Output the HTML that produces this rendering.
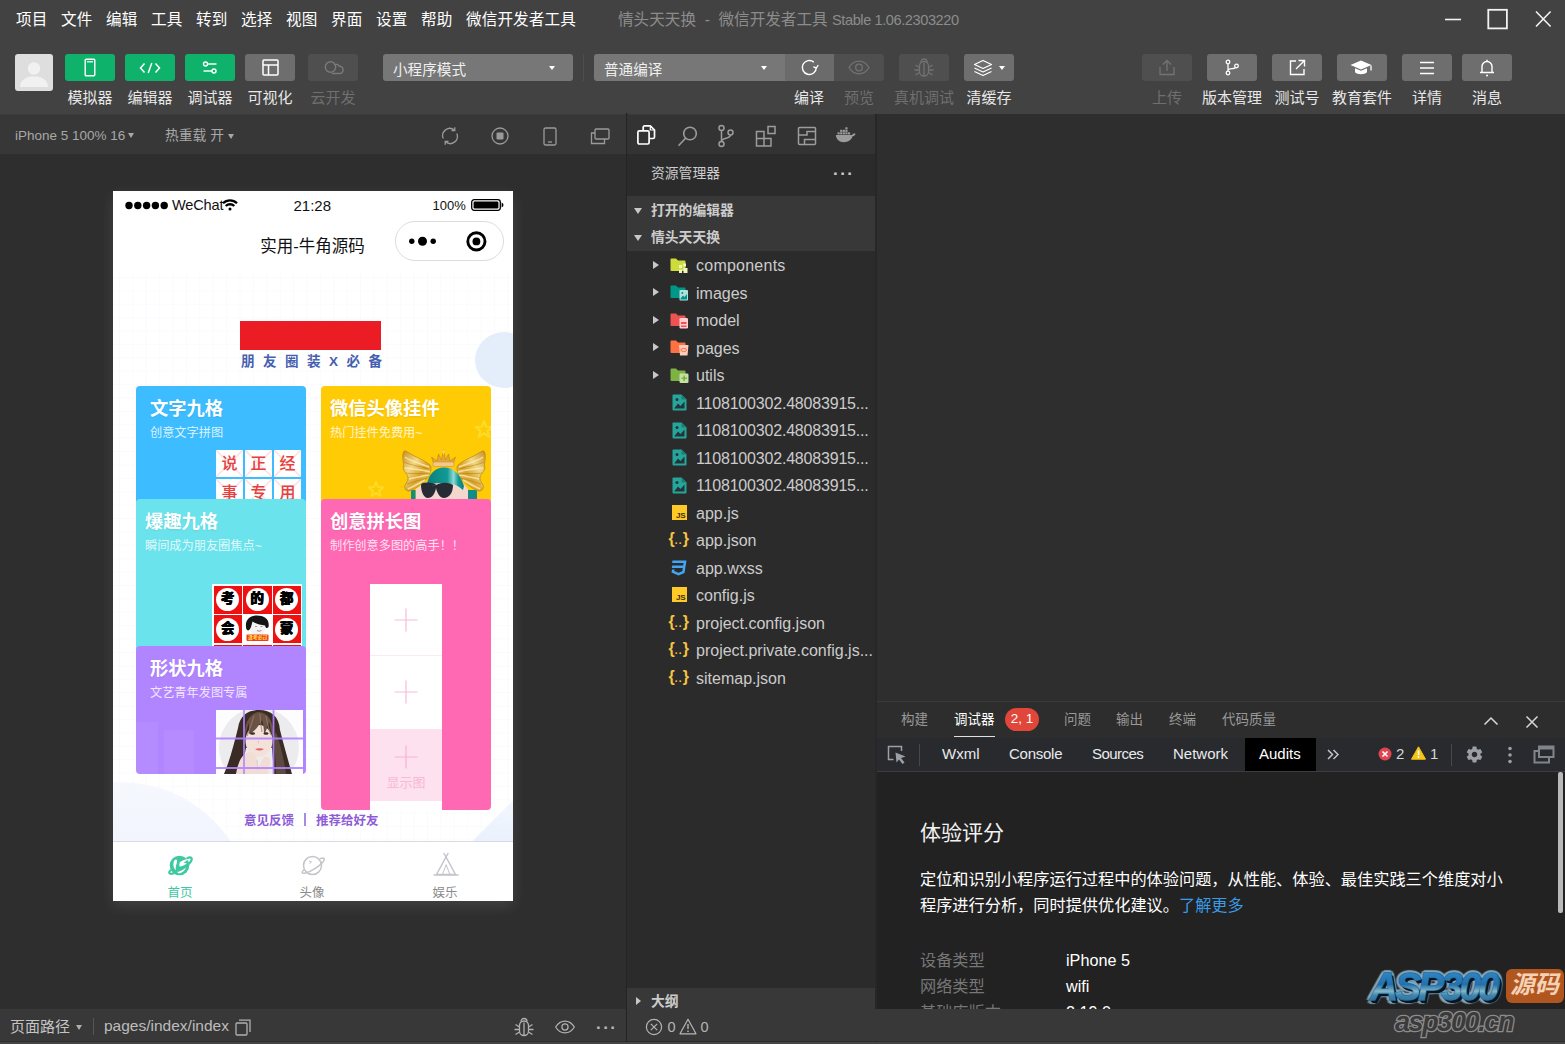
<!DOCTYPE html>
<html lang="zh-CN">
<head>
<meta charset="utf-8">
<title>微信开发者工具</title>
<style>
*{box-sizing:border-box;margin:0;padding:0}
html,body{width:1565px;height:1044px;overflow:hidden;background:#2e2e2e}
body{position:relative;font-family:"Liberation Sans","Noto Sans CJK SC",sans-serif;color:#ccc;font-size:15px}
.abs{position:absolute}
.t{position:absolute;white-space:nowrap;line-height:1}
svg{position:absolute;overflow:visible}
/* top */
#top{left:0;top:0;width:1565px;height:114px;background:#424242}
.menu{top:12px;font-size:15.6px;color:#fff;letter-spacing:0.1px}
.tb{position:absolute;top:54px;height:27px;width:50px;border-radius:3px}
.g{background:#0fb26b}
.gr{background:#6e6e6e}
.dk{background:#4f4f4f}
.lbl{top:90px;font-size:15px;color:#e8e8e8;text-align:center}
.lbl.dim{color:#6f6f6f}
.sel{position:absolute;top:54px;height:27px;background:#777;border-radius:3px}
/* sim */
#simbar{left:0;top:114px;width:626px;height:40px;background:#373737;border-top:1px solid #3b3b3b}
#simbg{left:0;top:154px;width:626px;height:855px;background:#2e2e2e}
#simstat{left:0;top:1009px;width:626px;height:32px;background:#383838}
#vdiv{left:625.500px;top:113px;width:2px;height:929px;background:#242424;border-right:.6px solid #333}
/* explorer */
#act{left:628px;top:114px;width:247px;height:40px;background:#333;border-top:1px solid #393939}
#exp{left:627px;top:154px;width:248px;height:890px;background:#2b2b2b}
.hdr{position:absolute;left:627px;width:248px;height:27px;background:#383838}
.hd{font-size:13.8px;font-weight:bold;color:#ccc}
.fn{left:696px;font-size:16px;color:#ccc}
.arr{position:absolute;width:0;height:0;border-left:6px solid #c8c8c8;border-top:4.5px solid transparent;border-bottom:4.5px solid transparent}
.arrd{position:absolute;width:0;height:0;border-top:6px solid #c8c8c8;border-left:4.5px solid transparent;border-right:4.5px solid transparent}
/* editor + panel */
#ediv{left:875px;top:114px;width:2px;height:929px;background:#272727}
#editor{left:877px;top:114px;width:688px;height:587px;background:#2e2e2e}
#ptabs{left:877px;top:701px;width:688px;height:37px;background:#2d2d2d;border-top:1px solid #3a3a3a}
#dtabs{left:877px;top:738px;width:688px;height:34px;background:#292a2d;border-bottom:1px solid #3d3d3d}
#dcont{left:877px;top:772px;width:688px;height:237px;background:#222}
#stat{left:627px;top:1009px;width:938px;height:32px;background:#383838}
#botedge{left:0;top:1041.500px;width:1565px;height:3px;background:#454545}
.pt{top:713px;font-size:13.5px;color:#999}
.dt{top:746px;font-size:15px;color:#e8eaed}
.ct{font-size:18.3px;font-weight:bold;color:#fff;text-shadow:0 1px 2px rgba(0,0,0,.08)}
.cs{font-size:12.2px;color:rgba(255,255,255,.82)}
.cell{width:27px;height:27px;background:linear-gradient(45deg,transparent 47%,rgba(240,110,110,.22) 49%,rgba(240,110,110,.22) 51%,transparent 53%),linear-gradient(-45deg,transparent 47%,rgba(240,110,110,.22) 49%,rgba(240,110,110,.22) 51%,transparent 53%),#fff;color:#e5403d;font-size:16px;font-weight:500;line-height:27px;text-align:center}
.rch{width:23px;height:23px;border-radius:50%;background:#fff;color:#000;font-size:13.5px;font-weight:900;line-height:22px;text-align:center;text-shadow:.4px 0 0 #000,-.4px 0 0 #000}
.wm::after{content:"ASP300";position:absolute;left:0;top:0;color:transparent;background:linear-gradient(180deg,#2f86c4 12%,#2371ae 45%,#5f9cb8 56%,#86b7c6 62%,#3f87ae 72%,#2a6f9c 90%);-webkit-background-clip:text;background-clip:text;text-shadow:none;-webkit-text-stroke:0}
</style>
</head>
<body>
<div id="top" class="abs"></div>
<!-- menu -->
<div class="t menu" style="left:16px">项目</div>
<div class="t menu" style="left:61px">文件</div>
<div class="t menu" style="left:106px">编辑</div>
<div class="t menu" style="left:151px">工具</div>
<div class="t menu" style="left:196px">转到</div>
<div class="t menu" style="left:241px">选择</div>
<div class="t menu" style="left:286px">视图</div>
<div class="t menu" style="left:331px">界面</div>
<div class="t menu" style="left:376px">设置</div>
<div class="t menu" style="left:421px">帮助</div>
<div class="t menu" style="left:466px">微信开发者工具</div>
<div class="t" style="left:618px;top:12px;font-size:15.6px;color:#8c8c8c">情头天天换&nbsp; -&nbsp; 微信开发者工具 <span style="font-size:14.600px;letter-spacing:-.42px">Stable 1.06.2303220</span></div>
<!-- window controls -->
<svg style="left:1440px;top:4px" width="120" height="30" viewBox="0 0 120 30" fill="none" stroke="#f2f2f2" stroke-width="1.6"><path d="M5 15.5H21"/><rect x="48.300000000000004" y="5.8" width="18.6" height="18.6" stroke-width="1.8"/><path d="M96 7.5L110.600 22.500M110.600 7.500L96 22.500"/></svg>
<!-- avatar -->
<div class="abs" style="left:15px;top:54px;width:38px;height:37px;background:#dedede;border-radius:3px;overflow:hidden">
<svg style="left:0;top:0" width="38" height="37" viewBox="0 0 38 37"><circle cx="19" cy="14.500" r="6.200" fill="#f1f1f1"/><path d="M5 33C5 25 12 23.500 15 22.500H23C26 23.500 33 25 33 33Z" fill="#f1f1f1"/></svg>
</div>
<!-- left buttons -->
<div class="tb g" style="left:65px"><svg style="left:19px;top:4px" width="12" height="19" viewBox="0 0 12 19" fill="none" stroke="#fff" stroke-width="1.4"><rect x="1.200" y="1.200" width="9.600" height="16.600" rx="1"/><path d="M3 3.800H9" stroke-width="1.200"/></svg></div>
<div class="tb g" style="left:125px"><svg style="left:14px;top:8px" width="22" height="12" viewBox="0 0 22 12" fill="none" stroke="#fff" stroke-width="1.5"><path d="M5.500 1.500L1.500 6L5.500 10.500M16.500 1.500L20.500 6L16.500 10.500M12.800 1L9.200 11"/></svg></div>
<div class="tb g" style="left:185px"><svg style="left:17px;top:6px" width="16" height="15" viewBox="0 0 16 15" fill="none" stroke="#fff" stroke-width="1.4"><circle cx="3.500" cy="4" r="2"/><path d="M5.500 4H14.500"/><circle cx="12" cy="11" r="2"/><path d="M1.500 11H10"/></svg></div>
<div class="tb gr" style="left:245px"><svg style="left:17px;top:5px" width="17" height="17" viewBox="0 0 17 17" fill="none" stroke="#fff" stroke-width="1.5"><rect x="1" y="1" width="15" height="15" rx="1"/><path d="M1 6H16M6.500 6V16"/></svg></div>
<div class="tb dk" style="left:308px"><svg style="left:15px;top:6px" width="22" height="16" viewBox="0 0 22 16" fill="none" stroke="#7a7a7a" stroke-width="1.4"><circle cx="7.500" cy="7" r="5.200"/><path d="M9 13.500H16.500A3.600 3.600 0 0 0 16.500 6.300A4 4 0 0 0 11 5"/></svg></div>
<div class="t lbl" style="left:40px;width:100px">模拟器</div>
<div class="t lbl" style="left:100px;width:100px">编辑器</div>
<div class="t lbl" style="left:160px;width:100px">调试器</div>
<div class="t lbl" style="left:220px;width:100px">可视化</div>
<div class="t lbl dim" style="left:283px;width:100px">云开发</div>
<!-- selects -->
<div class="sel" style="left:383px;width:190px"><div class="t" style="left:10px;top:8.500px;font-size:14.600px;color:#f0f0f0">小程序模式</div><div class="abs" style="left:166px;top:12px;border-top:4.500px solid #fff;border-left:3.500px solid transparent;border-right:3.500px solid transparent"></div></div>
<div class="abs" style="left:583px;top:54px;width:1px;height:27px;background:#4e4e4e"></div>
<div class="sel" style="left:594px;width:191px;border-radius:3px 0 0 3px"><div class="t" style="left:10px;top:8.500px;font-size:14.600px;color:#f0f0f0">普通编译</div><div class="abs" style="left:167px;top:12px;border-top:4.500px solid #fff;border-left:3.500px solid transparent;border-right:3.500px solid transparent"></div></div>
<div class="tb" style="left:785px;width:49px;background:#6b6b6b;border-radius:0"><svg style="left:14px;top:3px" width="21" height="21" viewBox="0 0 21 21" fill="none" stroke="#fff" stroke-width="1.4"><path d="M17.300 10.500A7 7 0 1 1 14.800 5.100"/><path d="M14.300 9.800L17.400 10.900L19.300 8" stroke-width="1.300"/></svg></div>
<div class="tb dk" style="left:834px;border-radius:0 3px 3px 0"><svg style="left:14px;top:6px" width="22" height="15" viewBox="0 0 22 15" fill="none" stroke="#737373" stroke-width="1.3"><path d="M1 7.500C4 2.500 8 1.200 11 1.200S18 2.500 21 7.500C18 12.500 14 13.800 11 13.800S4 12.500 1 7.500Z"/><circle cx="11" cy="7.500" r="3.300"/></svg></div>
<div class="tb dk" style="left:899px"><svg style="left:14px;top:4px" width="22" height="19" viewBox="0 0 22 19" fill="none" stroke="#737373" stroke-width="1.3"><path d="M6.500 8A4.500 4.500 0 0 1 15.500 8V13.500A4.500 4.500 0 0 1 6.500 13.500Z"/><path d="M11 5V17.500M8 4A3 3 0 0 1 14 4M6.500 9.500L2.500 7M6.500 12H1.500M6.500 14.500L2.500 17M15.500 9.500L19.500 7M15.500 12H20.500M15.500 14.500L19.500 17"/></svg></div>
<div class="tb gr" style="left:964px"><svg style="left:9px;top:5px" width="20" height="18" viewBox="0 0 20 18" fill="none" stroke="#fff" stroke-width="1.3" stroke-linejoin="round"><path d="M10 1.500L18.500 5.500L10 9.500L1.500 5.500Z"/><path d="M1.500 9L10 13L18.500 9M1.500 12.500L10 16.500L18.500 12.500"/></svg><div class="abs" style="left:35px;top:12px;border-top:4px solid #fff;border-left:3.500px solid transparent;border-right:3.500px solid transparent"></div></div>
<div class="t lbl" style="left:759px;width:100px">编译</div>
<div class="t lbl dim" style="left:809px;width:100px">预览</div>
<div class="t lbl dim" style="left:874px;width:100px">真机调试</div>
<div class="t lbl" style="left:939px;width:100px">清缓存</div>
<!-- right buttons -->
<div class="tb dk" style="left:1142px"><svg style="left:16px;top:5px" width="18" height="17" viewBox="0 0 18 17" fill="none" stroke="#737373" stroke-width="1.3"><path d="M2 8V15.500H16V8M9 12V1.500M5 5.500L9 1.500L13 5.500"/></svg></div>
<div class="tb gr" style="left:1207px"><svg style="left:17px;top:5px" width="16" height="17" viewBox="0 0 16 17" fill="none" stroke="#fff" stroke-width="1.3"><circle cx="4" cy="3" r="1.800"/><circle cx="4" cy="14" r="1.800"/><circle cx="12.500" cy="7" r="1.800"/><path d="M4 4.800V12.200M4 11.500C4 8.500 11 10.500 11.500 8.500"/></svg></div>
<div class="tb gr" style="left:1272px"><svg style="left:17px;top:5px" width="17" height="17" viewBox="0 0 17 17" fill="none" stroke="#fff" stroke-width="1.4"><path d="M7 2H1.500V15.500H15V10M9.500 1.500H15.500V7.500M15.500 1.500L7 10"/></svg></div>
<div class="tb gr" style="left:1337px"><svg style="left:13px;top:6px" width="24" height="16" viewBox="0 0 24 16"><path d="M11 0.500L21.500 5L11 9.500L0.500 5Z" fill="#fff"/><path d="M5 8.200V12.200C7 14.800 15 14.800 17 12.200V8.200L11 10.800Z" fill="#fff"/><path d="M21 5.500V10.500" stroke="#fff" stroke-width="1.300" fill="none"/></svg></div>
<div class="tb gr" style="left:1402px"><svg style="left:17px;top:7px" width="16" height="14" viewBox="0 0 16 14" fill="none" stroke="#fff" stroke-width="1.4"><path d="M1 1.500H15M1 7H15M1 12.500H15"/></svg></div>
<div class="tb gr" style="left:1462px"><svg style="left:17px;top:4px" width="16" height="20" viewBox="0 0 16 20" fill="none" stroke="#fff" stroke-width="1.4"><path d="M3 14V8.500A5 5 0 0 1 13 8.500V14M1 14.500H15"/><circle cx="8" cy="17.500" r="1" fill="#fff" stroke="none"/><path d="M8 3.500V1.800"/></svg></div>
<div class="t lbl dim" style="left:1117px;width:100px">上传</div>
<div class="t lbl" style="left:1182px;width:100px">版本管理</div>
<div class="t lbl" style="left:1247px;width:100px">测试号</div>
<div class="t lbl" style="left:1312px;width:100px">教育套件</div>
<div class="t lbl" style="left:1377px;width:100px">详情</div>
<div class="t lbl" style="left:1437px;width:100px">消息</div>
<!--TOOLBAR_END-->
<div id="simbar" class="abs"></div>
<div id="simbg" class="abs"></div>
<div class="t" style="left:15px;top:129px;font-size:13.500px;color:#a8a8a8">iPhone 5 100% 16</div>
<div class="abs" style="left:128px;top:133px;border-top:5px solid #a8a8a8;border-left:3.500px solid transparent;border-right:3.500px solid transparent"></div>
<div class="t" style="left:165px;top:129px;font-size:13.800px;color:#a8a8a8">热重载 开</div>
<div class="abs" style="left:227.500px;top:133.500px;border-top:5px solid #a8a8a8;border-left:3.500px solid transparent;border-right:3.500px solid transparent"></div>
<!-- sim toolbar icons -->
<svg style="left:440px;top:126px" width="20" height="20" viewBox="0 0 20 20" fill="none" stroke="#9a9a9a" stroke-width="1.3"><path d="M3.200 12.500A7.200 7.200 0 0 1 14.500 4.200M16.800 7.500A7.200 7.200 0 0 1 5.500 15.800"/><path d="M14.800 1.200L14.800 4.500L11.500 4.500M5.200 18.800L5.200 15.500L8.500 15.500"/></svg>
<svg style="left:490px;top:126px" width="20" height="20" viewBox="0 0 20 20" fill="none" stroke="#9a9a9a" stroke-width="1.3"><circle cx="10" cy="10" r="8"/><rect x="6.500" y="6.500" width="7" height="7" rx="1" fill="#9a9a9a" stroke="none"/></svg>
<svg style="left:543px;top:127px" width="14" height="19" viewBox="0 0 14 19" fill="none" stroke="#9a9a9a" stroke-width="1.3"><rect x="1" y="1" width="12" height="17" rx="1.500"/><path d="M5 15H9"/></svg>
<svg style="left:590px;top:128px" width="20" height="17" viewBox="0 0 20 17" fill="none" stroke="#9a9a9a" stroke-width="1.3"><rect x="5" y="1" width="14" height="10" rx="1"/><path d="M5 5H1.500V15.500H14.500V11"/></svg>
<!-- phone -->
<div id="phone" class="abs" style="left:113px;top:191px;width:400px;height:710px;background:#fff;overflow:hidden;box-shadow:0 5px 14px rgba(255,255,255,.1)">
<!-- status bar -->
<svg style="left:12px;top:10.400px" width="44" height="9" viewBox="0 0 44 9" fill="#000"><circle cx="4" cy="4.500" r="3.700"/><circle cx="12.800" cy="4.500" r="3.700"/><circle cx="21.600" cy="4.500" r="3.700"/><circle cx="30.400" cy="4.500" r="3.700"/><circle cx="39.200" cy="4.500" r="3.700"/></svg>
<div class="t" style="left:59px;top:6.800px;font-size:14.600px;letter-spacing:-.2px;color:#111">WeChat</div>
<svg style="left:109px;top:8.300px" width="16" height="12" viewBox="0 0 16 12" fill="none" stroke="#000" stroke-width="2.300"><path d="M1 4.200A10 10 0 0 1 15 4.200"/><path d="M3.700 7A6.200 6.200 0 0 1 12.300 7"/><circle cx="8" cy="10" r="1.500" fill="#000" stroke="none"/></svg>
<div class="t" style="left:180.500px;top:6.800px;font-size:15px;color:#111">21:28</div>
<div class="t" style="left:319.500px;top:8.300px;font-size:13px;color:#111">100%</div>
<svg style="left:358px;top:8px" width="34" height="12" viewBox="0 0 34 12"><rect x="0.700" y="0.700" width="28.600" height="10.600" rx="2.500" fill="none" stroke="#000" stroke-width="1.300"/><rect x="2.600" y="2.600" width="24.800" height="6.800" rx="1.200" fill="#000"/><path d="M30.600 3.500V8.500A2.600 2.600 0 0 0 30.600 3.500Z" fill="#000"/></svg>
<!-- nav -->
<div class="t" style="left:0;top:46.500px;width:399px;text-align:center;font-size:16.500px;color:#111">实用-牛角源码</div>
<div class="abs" style="left:282px;top:30px;width:109px;height:40px;border:1px solid #dcdcdc;border-radius:20px;background:#fff"></div>
<svg style="left:282px;top:30px" width="109" height="40" viewBox="0 0 109 40"><circle cx="16.800" cy="20.300" r="2.700" fill="#000"/><circle cx="27.500" cy="20.300" r="4.500" fill="#000"/><circle cx="38.200" cy="20.300" r="2.700" fill="#000"/><circle cx="81.400" cy="20.400" r="8.600" fill="none" stroke="#000" stroke-width="2.900"/><circle cx="81.400" cy="20.400" r="3.900" fill="#000"/></svg>
<!-- page -->
<div class="abs" style="left:0;top:80px;width:400px;height:570px;background-color:#fff;background-image:linear-gradient(to right,rgba(190,196,225,.065) 1px,transparent 1px),linear-gradient(to bottom,rgba(190,196,225,.065) 1px,transparent 1px);background-size:13.400px 13.400px;background-position:6px 6px;overflow:hidden">
<div class="abs" style="left:362px;top:61px;width:58px;height:56px;border-radius:50%;background:#e4eefb"></div>
<div class="abs" style="left:-126px;top:511px;width:266px;height:266px;border-radius:50%;background:linear-gradient(180deg,#f6f8fe,#eff3fd 35%)"></div>
<div class="abs" style="left:368px;top:538px;width:80px;height:80px;background:linear-gradient(135deg,#f4f7fe,#e6effc 60%);transform:rotate(45deg)"></div>
</div>
<div class="abs" style="left:127px;top:130px;width:141px;height:29px;background:#ec1c24"></div>
<div class="t" style="left:128px;top:164px;font-size:13.500px;font-weight:bold;color:#4560b0;letter-spacing:8.500px">朋友圈装X必备</div>
<!-- cards -->
<div class="abs card" style="left:23px;top:195px;width:170px;height:120px;background:#3dbdff;border-radius:4px">
 <div class="t ct" style="left:14px;top:14.200px">文字九格</div>
 <div class="t cs" style="left:14px;top:40.500px">创意文字拼图</div>
 <div class="abs cell" style="left:80px;top:64px">说</div><div class="abs cell" style="left:109px;top:64px">正</div><div class="abs cell" style="left:138px;top:64px">经</div>
 <div class="abs cell" style="left:80px;top:93px">事</div><div class="abs cell" style="left:109px;top:93px">专</div><div class="abs cell" style="left:138px;top:93px">用</div>
</div>
<div class="abs card" style="left:208px;top:195px;width:170px;height:120px;background:#ffcb05;border-radius:4px;overflow:hidden">
 <div class="t ct" style="left:9px;top:14.200px">微信头像挂件</div>
 <div class="t cs" style="left:9px;top:40.500px">热门挂件免费用~</div>
<svg style="left:81px;top:63px" width="84" height="50" viewBox="0 0 84 50">
<defs><linearGradient id="gw" x1="0" y1="0" x2="1" y2="1"><stop offset="0" stop-color="#c98d1d"/><stop offset=".35" stop-color="#f2d987"/><stop offset=".6" stop-color="#d9a32c"/><stop offset="1" stop-color="#f0d27a"/></linearGradient>
<linearGradient id="gw2" x1="1" y1="0" x2="0" y2="1"><stop offset="0" stop-color="#c98d1d"/><stop offset=".35" stop-color="#f2d987"/><stop offset=".6" stop-color="#d9a32c"/><stop offset="1" stop-color="#f0d27a"/></linearGradient>
<linearGradient id="gh" x1="0" y1="0" x2="1" y2="0"><stop offset="0" stop-color="#0b7f7d"/><stop offset=".55" stop-color="#129a94"/><stop offset=".72" stop-color="#8fd9d2"/><stop offset=".85" stop-color="#129a94"/><stop offset="1" stop-color="#0b7f7d"/></linearGradient></defs>
<path d="M9 50V41H13.500V50ZM65 50V41H75V50Z" fill="#118d88"/>
<path d="M14 50V40L24 33H60L66 40V50Z" fill="#f3d6cd"/>
<path d="M3.7 2.1Q1.6 1.0 1.0 4.7Q0.3 8.3 1.1 12.2Q1.9 16.0 1.2 18.2Q0.6 20.4 3.2 23.3Q5.8 26.2 6.1 28.8Q6.4 31.3 3.9 34.5Q1.3 37.7 3.5 40.6Q5.8 43.5 9.9 41.2Q14.0 39.0 16.9 36.8Q19.8 34.5 23.0 31.6Q26.2 28.8 27.8 24.6Q29.4 20.4 29.1 18.2Q28.8 16.0 25.2 13.8Q21.7 11.5 16.9 9.2Q12.1 7.0 8.9 5.1Q5.8 3.2 3.7 2.1Z" fill="url(#gw)" stroke="#b07a14" stroke-width=".6"/>
<path d="M80.3 2.1Q82.4 1.0 83.1 4.7Q83.7 8.3 82.9 12.2Q82.1 16.0 82.8 18.2Q83.4 20.4 80.8 23.3Q78.2 26.2 77.9 28.8Q77.6 31.3 80.2 34.5Q82.7 37.7 80.5 40.6Q78.2 43.5 74.1 41.2Q70.0 39.0 67.1 36.8Q64.2 34.5 61.0 31.6Q57.8 28.8 56.2 24.6Q54.6 20.4 54.9 18.2Q55.2 16.0 58.8 13.8Q62.3 11.5 67.1 9.2Q71.9 7.0 75.1 5.1Q78.2 3.2 80.3 2.1Z" fill="url(#gw2)" stroke="#b07a14" stroke-width=".6"/>
<path d="M3 8C8 12 17 14 27 18M3 19C10 20 19 20 28 23M7 30C13 29 20 27 27 26M6 40C12 37 18 34 23 31M81 8C76 12 67 14 57 18M81 19C74 20 65 20 56 23M77 30C71 29 64 27 57 26M78 40C72 37 66 34 61 31" stroke="#fff0b8" stroke-width="1.600" fill="none" opacity=".75"/>
<path d="M2 13C8 16 17 17 27 20M4 24C10 25 19 24 27 25M5 35C11 33 18 31 25 29M82 13C76 16 67 17 57 20M80 24C74 25 65 24 57 25M79 35C73 33 66 31 59 29" stroke="#a8700f" stroke-width=".9" fill="none" opacity=".55"/>
<path d="M25 35C27 24 34 18.500 42 18.500C51 18.500 58 24 62 37L61 41C56 36 50 34 44 34.500C37 33.500 31 34 26 37Z" fill="url(#gh)"/>
<path d="M31.500 14L29.500 8L35 12L36.500 5L39.500 11L41.500 0L43.500 11L46.500 5L48 12L53.500 8L51.500 14Z" fill="#e6a834" stroke="#b5761a" stroke-width=".5"/><path d="M41.500 0L43 3L41.500 6L40 3Z" fill="#ffd34d"/>
<rect x="31" y="13" width="21" height="4.500" rx="1.500" fill="#f3c98a" stroke="#c98636" stroke-width=".5"/>
<path d="M19 36C20 33 26 33 33 35L34 36C40 33 46 33 51 36C51 44 47 49 42 49C38 49 35 44 34 39C33 45 30 49 26 49C22 49 19 43 19 36Z" fill="#262b34"/>
<path d="M34 36C32 37 31 37 30 36" stroke="#4b3a44" stroke-width="1" fill="none"/>
</svg>
<svg style="left:47px;top:95px" width="16" height="16" viewBox="0 0 16 16"><path d="M8 1L10 6L15.500 6.300L11.200 9.700L12.600 15L8 12L3.400 15L4.800 9.700L0.500 6.300L6 6Z" fill="none" stroke="#ffdf33" stroke-width="2" opacity=".75" stroke-linejoin="round"/></svg>
<svg style="left:154px;top:34px" width="18" height="18" viewBox="0 0 16 16"><path d="M8 1L10 6L15.500 6.300L11.200 9.700L12.600 15L8 12L3.400 15L4.800 9.700L0.500 6.300L6 6Z" fill="none" stroke="#ffdf33" stroke-width="2" opacity=".75" stroke-linejoin="round"/></svg>
</div>
<div class="abs card" style="left:23px;top:308px;width:170px;height:150px;background:#6be3ed;border-radius:4px 4px 0 0;overflow:hidden">
 <div class="t ct" style="left:9px;top:14.200px">爆趣九格</div>
 <div class="t cs" style="left:9px;top:40.500px">瞬间成为朋友圈焦点~</div>
<div class="abs" style="left:76px;top:85px;width:90px;height:70px;background:#fff"></div><div class="abs" style="left:77.5px;top:86.5px;width:28.500px;height:28px;background:#ee1111"></div><div class="abs rch" style="left:80.2px;top:89.0px">考</div><div class="abs" style="left:107px;top:86.5px;width:28.500px;height:28px;background:#ee1111"></div><div class="abs rch" style="left:109.7px;top:89.0px">的</div><div class="abs" style="left:136.5px;top:86.5px;width:28.500px;height:28px;background:#ee1111"></div><div class="abs rch" style="left:139.2px;top:89.0px">都</div><div class="abs" style="left:77.5px;top:116px;width:28.500px;height:28px;background:#ee1111"></div><div class="abs rch" style="left:80.2px;top:118.5px">会</div><div class="abs" style="left:136.5px;top:116px;width:28.500px;height:28px;background:#ee1111"></div><div class="abs rch" style="left:139.2px;top:118.5px">蒙</div><div class="abs" style="left:77.5px;top:145.5px;width:28.500px;height:10px;background:#ee1111"></div><div class="abs" style="left:107px;top:145.5px;width:28.500px;height:10px;background:#ee1111"></div><div class="abs" style="left:136.5px;top:145.5px;width:28.500px;height:10px;background:#ee1111"></div><svg style="left:107px;top:116px" width="29" height="28" viewBox="0 0 29 28"><ellipse cx="14.500" cy="12.500" rx="8" ry="8" fill="#f4f4f4"/><path d="M3 12C2 4 8 0.500 14 0.500C21 0.500 27 4 25.500 12C24 14 22.500 13 22 10.500C18 10 12 8.500 9.500 6.500C8.500 10 8 14 5.500 15.500C4 15.500 3 14 3 12Z" fill="#151515"/><path d="M12 11.500H14M17.500 11.500H19.500" stroke="#888" stroke-width=".8"/><path d="M14 15.500Q16 17 18.500 15.500" stroke="#666" stroke-width=".7" fill="none"/><rect x="3.500" y="19.500" width="22" height="6.500" rx="1" fill="#f0381c"/></svg><div class="t" style="left:112px;top:136.3px;font-size:5px;font-weight:bold;color:#ffe14a;letter-spacing:-.2px">逢考必过</div>
</div>
<div class="abs card" style="left:23px;top:455px;width:170px;height:128px;background:#b185ff;border-radius:4px;overflow:hidden">
 <div class="t ct" style="left:14px;top:14.200px">形状九格</div>
 <div class="t cs" style="left:14px;top:40.500px">文艺青年发图专属</div>
<svg style="left:79.500px;top:64px" width="87" height="64" viewBox="0 0 87 64">
<defs><clipPath id="gc"><rect x="0" y="0" width="87" height="64"/></clipPath></defs>
<g clip-path="url(#gc)">
<rect width="87" height="64" fill="#fdfcff"/>
<circle cx="43" cy="37.500" r="40" fill="#ececee"/>
<path d="M22 18C24 4 33 0 43 0C55 0 63 6 64 20C68 36 72 50 76 64H58L56 38L30 38L27 52L24 64H8C14 50 18 34 22 18Z" fill="#3a2b25"/>
<path d="M60 22C64 34 68 48 70 64H60C60 50 58 36 58 26Z" fill="#5d4a3e"/>
<ellipse cx="43" cy="31" rx="13.500" ry="16" fill="#f4e1da"/>
<path d="M29 27C28 12 34 3 43 2C53 3 58 12 57 27C55 22 54 16 53 12C51 18 50 22 48 24C48 18 47 13 46 10C43 16 38 22 33 24C33 20 33 16 33 13C31 18 30 22 29 27Z" fill="#6a5245"/>
<path d="M31 26C33 22 36 12 38 6M44 4C44 10 45 16 46 22M50 6C51 12 53 20 55 25" stroke="#9a7f6c" stroke-width="1.200" fill="none" opacity=".7"/>
<ellipse cx="36.500" cy="23.500" rx="2.600" ry="1.300" fill="#3b2c28"/><ellipse cx="50" cy="23.500" rx="2.600" ry="1.300" fill="#3b2c28"/>
<path d="M39 39Q43.500 37.500 48 39Q43.500 42 39 39Z" fill="#e2636a"/>
<path d="M42.500 31V33.500" stroke="#e3c4ba" stroke-width="1"/>
<path d="M20 64C22 52 26 44 33 42C38 42 40 46 41 50L42 58L48 47C52 46 55 48 54 53L52 64Z" fill="#f3dcd3"/>
<path d="M41 50L42 60" stroke="#e0c3b8" stroke-width=".8"/>
</g>
<path d="M28 0V64M57.500 0V64M0 28.500H87M0 58H87" stroke="#b185ff" stroke-width="1.800" opacity=".9"/>
</svg>
<div class="abs" style="left:0;top:76px;width:22px;height:52px;background:rgba(255,255,255,.06)"></div>
<div class="abs" style="left:28px;top:84px;width:30px;height:44px;background:rgba(255,255,255,.05)"></div>
</div>
<div class="abs card" style="left:208px;top:308px;width:170px;height:311px;background:#ff69b4;border-radius:4px">
 <div class="t ct" style="left:9px;top:14.200px">创意拼长图</div>
 <div class="t cs" style="left:9px;top:40.500px">制作创意多图的高手！！</div>
 <div class="abs" style="left:49px;top:85px;width:72px;height:226px;background:#fff"></div>
 <div class="abs" style="left:49px;top:156px;width:72px;height:1px;background:#fbeaf2"></div>
 <div class="abs" style="left:49px;top:230px;width:72px;height:72px;background:#fde1ee"></div>
 <svg style="left:49px;top:85px" width="72" height="225" viewBox="0 0 72 225" stroke="#f7bcd8" stroke-width="1.200" fill="none"><path d="M24.500 36H47.500M36 24.500V47.500M24.500 108H47.500M36 96.500V119.500"/><path d="M24.500 173H47.500M36 161.500V184.500" stroke="#f6b3d2"/></svg>
 <div class="t" style="left:49px;top:277px;width:72px;text-align:center;font-size:13px;color:#f7b9d6">显示图</div>
</div>
<div class="t" style="left:131px;top:623.700px;font-size:12.500px;font-weight:bold;color:#8d5bd8">意见反馈</div>
<div class="abs" style="left:191px;top:622px;width:2px;height:13px;background:#a58ae6"></div>
<div class="t" style="left:203px;top:623.700px;font-size:12.500px;font-weight:bold;color:#8d5bd8">推荐给好友</div>
<!-- tabbar -->
<div class="abs" style="left:0;top:650px;width:400px;height:60px;background:#fff;border-top:1px solid #d9d9df"></div>
<svg style="left:55px;top:662px" width="25" height="24" viewBox="0 0 25 24"><circle cx="11.500" cy="12.500" r="9.800" fill="#3fc9a2"/><path d="M3 17C0 19.500 1 21.500 5 20.500C11 19 19 13.500 22.500 9C25 5.500 23.500 3.500 19.500 5" fill="none" stroke="#3fc9a2" stroke-width="2.200" stroke-linecap="round"/><path d="M6 8C8 6 9.500 6 9 9C8.500 12 7 14 8 17C6 16 4.500 12 6 8ZM12 9C15 7 18 6 21 6C18 8 17 9 15.500 9.500C17 10 18 10 19 10C17 12 14 13.500 11.500 13.500C11 12 11.500 10 12 9ZM9 19C12 18.500 15 17 18 14.500C17 17.500 14 20 11 20.500Z" fill="#fff"/></svg>
<svg style="left:187px;top:662px" width="26" height="24" viewBox="0 0 26 24" fill="none" stroke="#c4c4cb" stroke-width="1.500"><circle cx="12.500" cy="12.500" r="9"/><path d="M4.500 16.500C1 19 1.500 21 5.500 20C11.500 18.500 19 13.500 22.500 9.500C25.500 6 24.500 4 20.500 5.500" stroke-linecap="round"/><path d="M9 8L11.500 9L9.500 10.500" stroke-width="1"/></svg>
<svg style="left:320px;top:661px" width="26" height="25" viewBox="0 0 26 25" fill="none" stroke="#c4c4cb" stroke-width="1.500" stroke-linejoin="round" stroke-linecap="round"><path d="M13 5L3.500 22.500H22.500Z"/><path d="M1 23H25M11 1.500L13 5L15 1.500"/><path d="M13 13L9.500 22.500H16.500Z" stroke-width="1"/></svg>
<div class="t" style="left:17px;top:696.300px;width:100px;text-align:center;font-size:12.500px;color:#3fc9a2">首页</div>
<div class="t" style="left:149px;top:696.300px;width:100px;text-align:center;font-size:12.500px;color:#8a8a8a">头像</div>
<div class="t" style="left:282px;top:696.300px;width:100px;text-align:center;font-size:12.500px;color:#8a8a8a">娱乐</div>

</div>
<div id="simstat" class="abs"></div>
<div class="t" style="left:10px;top:1019px;font-size:15px;color:#c4c4c4">页面路径</div>
<div class="abs" style="left:76px;top:1025px;border-top:5px solid #b0b0b0;border-left:3.500px solid transparent;border-right:3.500px solid transparent"></div>
<div class="abs" style="left:93px;top:1018px;width:1px;height:17px;background:#555"></div>
<div class="t" style="left:104px;top:1018px;font-size:15.500px;color:#bdbdbd">pages/index/index</div>
<svg style="left:235px;top:1019px" width="16" height="17" viewBox="0 0 16 17" fill="none" stroke="#b0b0b0" stroke-width="1.3"><rect x="1" y="4" width="11" height="12" rx="1"/><path d="M4 1.200H15V13"/></svg>
<svg style="left:513px;top:1017px" width="22" height="20" viewBox="0 0 22 19" fill="none" stroke="#b0b0b0" stroke-width="1.3"><path d="M6.500 8A4.500 4.500 0 0 1 15.500 8V13.500A4.500 4.500 0 0 1 6.500 13.500Z"/><path d="M11 5V17.500M8 4A3 3 0 0 1 14 4M6.500 9.500L2.500 7M6.500 12H1.500M6.500 14.500L2.500 17M15.500 9.500L19.500 7M15.500 12H20.500M15.500 14.500L19.500 17"/></svg>
<svg style="left:554px;top:1020px" width="22" height="14" viewBox="0 0 22 15" fill="none" stroke="#b0b0b0" stroke-width="1.3"><path d="M1 7.500C4 2.500 8 1.200 11 1.200S18 2.500 21 7.500C18 12.500 14 13.800 11 13.800S4 12.500 1 7.500Z"/><circle cx="11" cy="7.500" r="3.300"/></svg>
<div class="t" style="left:596px;top:1018.500px;font-size:17px;color:#b8b8b8;letter-spacing:1.500px;font-weight:bold">···</div>
<div id="vdiv" class="abs"></div>
<!--SIM_END-->
<div id="act" class="abs"></div><div id="exp" class="abs"></div>
<svg style="left:637px;top:124.500px" width="19" height="20" viewBox="0 0 19 20" fill="none" stroke="#fff" stroke-width="1.700" stroke-linejoin="round"><path d="M6.200 5V2.300Q6.200 0.900 7.700 0.900H13.300L17.500 5V12Q17.500 13.500 16 13.500H12.500"/><path d="M13.300 0.900V5H17.500" stroke-width="1.200"/><rect x="0.900" y="5.800" width="11.200" height="13.200" rx="1.500"/></svg>
<svg style="left:676.500px;top:125px" width="22" height="22" viewBox="0 0 22 22" fill="none" stroke="#9c9c9c" stroke-width="1.6"><circle cx="13" cy="8.500" r="6.300"/><path d="M8.800 13L1.500 20.800"/></svg>
<svg style="left:717px;top:124px" width="18" height="24" viewBox="0 0 18 24" fill="none" stroke="#9c9c9c" stroke-width="1.5"><circle cx="4.500" cy="4" r="2.500"/><circle cx="4.500" cy="20" r="2.500"/><circle cx="13.500" cy="8.500" r="2.500"/><path d="M4.500 6.500V17.500M13.500 11C13.500 15 4.500 13.500 4.500 17.500"/></svg>
<svg style="left:755px;top:125px" width="22" height="22" viewBox="0 0 22 22" fill="none" stroke="#9c9c9c" stroke-width="1.5"><path d="M1.500 6.500H9V21H1.500ZM9 13.500H16V21H9M1.500 13.500H9"/><rect x="13" y="1.500" width="7" height="7"/></svg>
<svg style="left:797px;top:126px" width="20" height="20" viewBox="0 0 20 20" fill="none" stroke="#9c9c9c" stroke-width="1.5"><rect x="1.500" y="1.500" width="17" height="17" rx="1"/><path d="M1.500 9H10V5.500H18.500M7.500 18.500V13.500H18.500"/></svg>
<svg style="left:835px;top:126.500px" width="21" height="16" viewBox="0 0 25 19" fill="#9c9c9c"><path d="M1 9.500H20.500C21 8 22.200 7.500 24.500 8C24 9.800 22.800 10.800 21 11C19.500 15.500 16 18 10.500 18C5 18 1.500 15 1 9.500Z"/><rect x="3" y="6.300" width="2.600" height="2.500"/><rect x="6.100" y="6.300" width="2.600" height="2.500"/><rect x="9.200" y="6.300" width="2.600" height="2.500"/><rect x="12.300" y="6.300" width="2.600" height="2.500"/><rect x="15.400" y="6.300" width="2.600" height="2.500"/><rect x="6.100" y="3.300" width="2.600" height="2.500"/><rect x="9.200" y="3.300" width="2.600" height="2.500"/><rect x="12.300" y="3.300" width="2.600" height="2.500"/><rect x="12.300" y="0.300" width="2.600" height="2.500"/></svg>
<div class="t" style="left:651px;top:167px;font-size:13.800px;color:#ccc">资源管理器</div>
<div class="t" style="left:833px;top:165px;font-size:17px;color:#ccc;letter-spacing:1.500px;font-weight:bold">···</div>
<div class="hdr" style="top:196px;height:55px"></div>
<div class="arrd" style="left:634px;top:208px"></div><div class="t hd" style="left:651px;top:204px">打开的编辑器</div>
<div class="arrd" style="left:634px;top:235px"></div><div class="t hd" style="left:651px;top:231px">情头天天换</div>
<div class="arr" style="left:653px;top:260.8px"></div>
<svg style="left:670px;top:258px" width="19" height="16" viewBox="0 0 19 16"><path d="M0.500 1.500Q0.500 0.500 1.500 0.500H6L8 2.500H14.500Q15.500 2.500 15.500 3.500V12Q15.500 13 14.500 13H1.500Q0.500 13 0.500 12Z" fill="#cddc39"/><path d="M9 7H12V10H9ZM13 5.500H16V8.500H13ZM9 11.500H12V15H9ZM13.500 10H17.500V15H13.500Z" fill="#f0f4c3"/></svg>
<div class="t fn" style="top:258.2px"><span style="letter-spacing:.24px">components</span></div>
<div class="arr" style="left:653px;top:288.2px"></div>
<svg style="left:670px;top:285px" width="19" height="16" viewBox="0 0 19 16"><path d="M0.500 1.500Q0.500 0.500 1.500 0.500H6L8 2.500H14.500Q15.500 2.500 15.500 3.500V12Q15.500 13 14.500 13H1.500Q0.500 13 0.500 12Z" fill="#009688"/><rect x="9.500" y="5" width="8.500" height="10.500" rx="0.800" fill="#b2dfdb"/><path d="M10.500 13.500L13 10.500L14.500 12L17 9V14.500H10.500Z" fill="#009688"/><circle cx="12.300" cy="8" r="1" fill="#009688"/></svg>
<div class="t fn" style="top:285.6px">images</div>
<div class="arr" style="left:653px;top:315.8px"></div>
<svg style="left:670px;top:313px" width="19" height="16" viewBox="0 0 19 16"><path d="M0.500 1.500Q0.500 0.500 1.500 0.500H6L8 2.500H14.500Q15.500 2.500 15.500 3.500V12Q15.500 13 14.500 13H1.500Q0.500 13 0.500 12Z" fill="#ef5350"/><rect x="9.500" y="5" width="8.500" height="10.500" rx="1.200" fill="#ffcdd2"/><rect x="11" y="9" width="5.500" height="2" fill="#ef5350"/><rect x="11" y="12.500" width="5.500" height="1.500" fill="#ef5350"/></svg>
<div class="t fn" style="top:313.2px">model</div>
<div class="arr" style="left:653px;top:343.2px"></div>
<svg style="left:670px;top:340px" width="19" height="16" viewBox="0 0 19 16"><path d="M0.500 1.500Q0.500 0.500 1.500 0.500H6L8 2.500H14.500Q15.500 2.500 15.500 3.500V12Q15.500 13 14.500 13H1.500Q0.500 13 0.500 12Z" fill="#ff7043"/><path d="M9 5H18.500L17.500 15.500H10Z" fill="#ffccbc"/><ellipse cx="13.700" cy="10" rx="2.800" ry="1.600" fill="none" stroke="#ff7043" stroke-width="1"/></svg>
<div class="t fn" style="top:340.6px">pages</div>
<div class="arr" style="left:653px;top:370.8px"></div>
<svg style="left:670px;top:368px" width="19" height="16" viewBox="0 0 19 16"><path d="M0.500 1.500Q0.500 0.500 1.500 0.500H6L8 2.500H14.500Q15.500 2.500 15.500 3.500V12Q15.500 13 14.500 13H1.500Q0.500 13 0.500 12Z" fill="#7cb342"/><rect x="9.500" y="5.500" width="9" height="9.500" rx="1.200" fill="#c5e1a5"/><path d="M11.500 10.200H17M14.200 7.500V13" stroke="#7cb342" stroke-width="1.600"/></svg>
<div class="t fn" style="top:368.2px">utils</div>
<svg style="left:671.5px;top:394px" width="15" height="17" viewBox="0 0 15 17"><path d="M1.500 0.500H9.500L14.500 5.500V15.500Q14.500 16.500 13.500 16.500H1.500Q0.500 16.500 0.500 15.500V1.500Q0.500 0.500 1.500 0.500Z" fill="#26a69a"/><path d="M2.500 14L6 9.500L8.500 12L12.500 7.500V14.500H2.500Z" fill="#23353a"/><circle cx="5" cy="5.500" r="1.500" fill="#23353a"/><path d="M9.500 0.500V5.500H14.500Z" fill="#1c7f76"/></svg>
<div class="t fn" style="top:395.6px"><span style="letter-spacing:-.19px">1108100302.48083915...</span></div>
<svg style="left:671.5px;top:422px" width="15" height="17" viewBox="0 0 15 17"><path d="M1.500 0.500H9.500L14.500 5.500V15.500Q14.500 16.500 13.500 16.500H1.500Q0.500 16.500 0.500 15.500V1.500Q0.500 0.500 1.500 0.500Z" fill="#26a69a"/><path d="M2.500 14L6 9.500L8.500 12L12.500 7.500V14.500H2.500Z" fill="#23353a"/><circle cx="5" cy="5.500" r="1.500" fill="#23353a"/><path d="M9.500 0.500V5.500H14.500Z" fill="#1c7f76"/></svg>
<div class="t fn" style="top:423.2px"><span style="letter-spacing:-.19px">1108100302.48083915...</span></div>
<svg style="left:671.5px;top:449px" width="15" height="17" viewBox="0 0 15 17"><path d="M1.500 0.500H9.500L14.500 5.500V15.500Q14.500 16.500 13.500 16.500H1.500Q0.500 16.500 0.500 15.500V1.500Q0.500 0.500 1.500 0.500Z" fill="#26a69a"/><path d="M2.500 14L6 9.500L8.500 12L12.500 7.500V14.500H2.500Z" fill="#23353a"/><circle cx="5" cy="5.500" r="1.500" fill="#23353a"/><path d="M9.500 0.500V5.500H14.500Z" fill="#1c7f76"/></svg>
<div class="t fn" style="top:450.6px"><span style="letter-spacing:-.19px">1108100302.48083915...</span></div>
<svg style="left:671.5px;top:477px" width="15" height="17" viewBox="0 0 15 17"><path d="M1.500 0.500H9.500L14.500 5.500V15.500Q14.500 16.500 13.500 16.500H1.500Q0.500 16.500 0.500 15.500V1.500Q0.500 0.500 1.500 0.500Z" fill="#26a69a"/><path d="M2.500 14L6 9.500L8.500 12L12.500 7.500V14.500H2.500Z" fill="#23353a"/><circle cx="5" cy="5.500" r="1.500" fill="#23353a"/><path d="M9.500 0.500V5.500H14.500Z" fill="#1c7f76"/></svg>
<div class="t fn" style="top:478.2px"><span style="letter-spacing:-.19px">1108100302.48083915...</span></div>
<div class="abs" style="left:671.5px;top:505px;width:15px;height:15px;background:#ffca28"></div><div class="t" style="left:676.0px;top:511.5px;font-size:8px;font-weight:bold;color:#3a3000;letter-spacing:-0.300px">JS</div>
<div class="t fn" style="top:505.6px">app.js</div>
<div class="t" style="left:668.5px;top:530.5px;font-size:16px;color:#f5c443;letter-spacing:-1px;font-weight:bold">{<span style="font-size:10px;letter-spacing:1.200px;margin-left:1px;position:relative;top:0px">..</span>}</div>
<div class="t fn" style="top:533.2px">app.json</div>
<svg style="left:670px;top:560px" width="17" height="16" viewBox="0 0 17 16" fill="#42a5f5"><path d="M2.500 0.500H16.500L14.500 13L8.500 15.500L1.500 12.500L2 9.500H4.500L4.300 11L8.500 12.800L12.300 11.200L12.800 8H1.800L2.200 5.500H13.200L13.500 3H2.100Z"/></svg>
<div class="t fn" style="top:560.6px">app.wxss</div>
<div class="abs" style="left:671.5px;top:587px;width:15px;height:15px;background:#ffca28"></div><div class="t" style="left:676.0px;top:593.5px;font-size:8px;font-weight:bold;color:#3a3000;letter-spacing:-0.300px">JS</div>
<div class="t fn" style="top:588.2px">config.js</div>
<div class="t" style="left:668.5px;top:613.5px;font-size:16px;color:#f5c443;letter-spacing:-1px;font-weight:bold">{<span style="font-size:10px;letter-spacing:1.200px;margin-left:1px;position:relative;top:0px">..</span>}</div>
<div class="t fn" style="top:615.6px">project.config.json</div>
<div class="t" style="left:668.5px;top:640.5px;font-size:16px;color:#f5c443;letter-spacing:-1px;font-weight:bold">{<span style="font-size:10px;letter-spacing:1.200px;margin-left:1px;position:relative;top:0px">..</span>}</div>
<div class="t fn" style="top:643.2px">project.private.config.js...</div>
<div class="t" style="left:668.5px;top:668.5px;font-size:16px;color:#f5c443;letter-spacing:-1px;font-weight:bold">{<span style="font-size:10px;letter-spacing:1.200px;margin-left:1px;position:relative;top:0px">..</span>}</div>
<div class="t fn" style="top:670.6px">sitemap.json</div>
<div class="hdr" style="top:988px;height:21px"></div>
<div class="arr" style="left:636px;top:996.500px;border-left-width:5.500px;border-top-width:4.500px;border-bottom-width:4.500px"></div><div class="t hd" style="left:651px;top:995px">大纲</div><!--EXPLORER_END-->
<div id="ediv" class="abs"></div>
<div id="editor" class="abs"></div>
<div id="ptabs" class="abs"></div>
<div id="dtabs" class="abs"></div>
<div id="dcont" class="abs"></div>
<div class="t pt" style="left:901px">构建</div>
<div class="t pt" style="left:954px;color:#fff">调试器</div>
<div class="abs" style="left:954px;top:736px;width:41px;height:1px;background:#e0e0e0"></div>
<div class="abs" style="left:1005px;top:708px;width:34px;height:23px;border-radius:11.500px;background:#e0463a"></div>
<div class="t" style="left:1005px;top:712px;width:34px;text-align:center;font-size:13.500px;color:#fff">2, 1</div>
<div class="t pt" style="left:1064px">问题</div>
<div class="t pt" style="left:1116px">输出</div>
<div class="t pt" style="left:1169px">终端</div>
<div class="t pt" style="left:1222px">代码质量</div>
<svg style="left:1483px;top:715px" width="16" height="12" viewBox="0 0 16 12" fill="none" stroke="#d8d8d8" stroke-width="1.5"><path d="M1.500 9.500L8 3L14.500 9.500"/></svg>
<svg style="left:1525px;top:715px" width="14" height="14" viewBox="0 0 14 14" fill="none" stroke="#d8d8d8" stroke-width="1.5"><path d="M1.500 1.500L12.500 12.500M12.500 1.500L1.500 12.500"/></svg>
<!-- devtools tab bar -->
<svg style="left:887px;top:745px" width="21" height="20" viewBox="0 0 21 20" fill="none" stroke="#9aa0a6" stroke-width="1.5"><path d="M14.500 6V1.500H1.500V14.500H6.500"/><path d="M8.500 7.500L18.500 11.500L14 13L17.500 17.500L15.500 19L12 14.500L9.500 17.500Z" fill="#9aa0a6" stroke="none"/></svg>
<div class="abs" style="left:919px;top:744px;width:1px;height:22px;background:#45474a"></div>
<div class="t dt" style="left:942px">Wxml</div>
<div class="t dt" style="left:1009px;letter-spacing:-.25px">Console</div>
<div class="t dt" style="left:1092px;letter-spacing:-.55px">Sources</div>
<div class="t dt" style="left:1173px">Network</div>
<div class="abs" style="left:1245px;top:738px;width:71px;height:33px;background:#000"></div>
<div class="t dt" style="left:1259px;color:#fff">Audits</div>
<svg style="left:1327px;top:749px" width="12" height="11" viewBox="0 0 12 11" fill="none" stroke="#c0c4c9" stroke-width="1.5"><path d="M1 1L5.500 5.500L1 10M6.500 1L11 5.500L6.500 10"/></svg>
<svg style="left:1378px;top:747px" width="14" height="14" viewBox="0 0 14 14"><circle cx="7" cy="7" r="6.500" fill="#e0454f"/><path d="M4.500 4.500L9.500 9.500M9.500 4.500L4.500 9.500" stroke="#fff" stroke-width="1.600"/></svg>
<div class="t dt" style="left:1396px;color:#d5d7da">2</div>
<svg style="left:1411px;top:746px" width="15" height="14" viewBox="0 0 15 14"><path d="M7.500 0.800L14.500 13.200H0.500Z" fill="#f5c518" stroke="#f5c518" stroke-width="1" stroke-linejoin="round"/><path d="M7.500 4.500V9" stroke="#fff" stroke-width="1.600"/><circle cx="7.500" cy="11" r="0.900" fill="#fff"/></svg>
<div class="t dt" style="left:1430px;color:#d5d7da">1</div>
<div class="abs" style="left:1451px;top:744px;width:1px;height:22px;background:#45474a"></div>
<svg style="left:1465px;top:745px" width="19" height="19" viewBox="0 0 24 24" fill="#9aa0a6"><path d="M19.430 12.980c.040-.320.070-.640.070-.980s-.030-.660-.070-.980l2.110-1.650c.190-.150.240-.420.120-.640l-2-3.460c-.120-.220-.390-.300-.610-.220l-2.490 1c-.520-.400-1.080-.730-1.690-.980l-.380-2.650C14.460 2.180 14.250 2 14 2h-4c-.250 0-.460.180-.490.420l-.380 2.650c-.610.250-1.170.590-1.690.980l-2.490-1c-.230-.090-.490 0-.610.220l-2 3.460c-.130.220-.070.490.120.640l2.110 1.650c-.040.320-.070.650-.070.980s.030.660.070.980l-2.110 1.650c-.190.150-.240.420-.120.640l2 3.460c.120.220.390.300.610.220l2.490-1c.520.400 1.080.730 1.690.980l.380 2.650c.030.240.240.420.490.420h4c.250 0 .460-.180.490-.420l.380-2.650c.610-.250 1.170-.590 1.690-.980l2.490 1c.230.090.490 0 .610-.220l2-3.460c.120-.220.070-.490-.120-.640l-2.110-1.650zM12 15.500c-1.930 0-3.500-1.570-3.500-3.500s1.570-3.500 3.500-3.500 3.500 1.570 3.500 3.500-1.570 3.500-3.500 3.500z"/></svg>
<svg style="left:1507px;top:746px" width="6" height="18" viewBox="0 0 6 18" fill="#9aa0a6"><circle cx="3" cy="2.500" r="1.800"/><circle cx="3" cy="9" r="1.800"/><circle cx="3" cy="15.500" r="1.800"/></svg>
<svg style="left:1533px;top:745px" width="22" height="19" viewBox="0 0 22 19" fill="none" stroke="#80858b" stroke-width="2"><rect x="6" y="1.500" width="14.500" height="10.500"/><path d="M6 6H1.500V17.500H16V12"/><path d="M6 3H20.500" stroke-width="3"/></svg>
<!-- content -->
<div class="t" style="left:920px;top:822px;font-size:21px;color:#f2f2f2">体验评分</div>
<div class="t" style="left:920px;top:871px;font-size:16.200px;color:#fff">定位和识别小程序运行过程中的体验问题，从性能、体验、最佳实践三个维度对小</div>
<div class="t" style="left:920px;top:897px;font-size:16.200px;color:#fff">程序进行分析，同时提供优化建议。<span style="color:#3b9be6">了解更多</span></div>
<div class="t" style="left:920px;top:952px;font-size:16.200px;color:#777">设备类型</div>
<div class="t" style="left:1066px;top:952px;font-size:16.200px;color:#fff">iPhone 5</div>
<div class="t" style="left:920px;top:978px;font-size:16.200px;color:#777">网络类型</div>
<div class="t" style="left:1066px;top:978px;font-size:16.200px;color:#fff">wifi</div>
<div class="t" style="left:920px;top:1004px;font-size:16.200px;color:#777">基础库版本</div>
<div class="t" style="left:1066px;top:1004px;font-size:16.200px;color:#fff">2.19.0</div>
<div class="abs" style="left:1558px;top:772px;width:5px;height:141px;background:#b9b9b9;border-radius:2px"></div>
<div id="stat" class="abs"></div>
<div id="botedge" class="abs"></div>
<svg style="left:645px;top:1018px" width="18" height="18" viewBox="0 0 18 18" fill="none" stroke="#b5b5b5" stroke-width="1.200"><circle cx="9" cy="9" r="7.600"/><path d="M5.800 5.800L12.200 12.200M12.200 5.800L5.800 12.200"/></svg>
<div class="t" style="left:667.500px;top:1019.500px;font-size:14.500px;color:#b5b5b5">0</div>
<svg style="left:679px;top:1018px" width="18" height="17" viewBox="0 0 18 17" fill="none" stroke="#b5b5b5" stroke-width="1.200" stroke-linejoin="round"><path d="M9 1.200L17 15.800H1Z"/><path d="M9 6V11M9 12.500V14" stroke-width="1.400"/></svg>
<div class="t" style="left:700.500px;top:1019.500px;font-size:14.500px;color:#b5b5b5">0</div>
<!-- watermark -->
<div class="t wm" style="left:1370px;top:967px;font-size:39px;font-weight:bold;font-style:italic;color:#2575b2;letter-spacing:-3.100px;-webkit-text-stroke:1.300px #21699f;text-shadow:1.500px 1.500px 0 #0a1420,2.500px 2.500px 0 #0a1420,-3px 0 1px rgba(132,170,190,.8),3px 0 1px rgba(132,170,190,.8),0 -3px 1px rgba(132,170,190,.8),0 3.500px 1px rgba(132,170,190,.8),-2px -2px 1px rgba(132,170,190,.8),3px 3px 1px rgba(132,170,190,.8),2px -2px 1px rgba(132,170,190,.8),-2px 3px 1px rgba(132,170,190,.8)">ASP300</div>
<div class="abs" style="left:1506px;top:969px;width:58px;height:34px;background:#b2561f;border-radius:6px"></div>
<div class="t" style="left:1510px;top:973px;font-size:24.500px;font-weight:bold;font-style:italic;color:#f4d2b6">源码</div>
<div class="t" style="left:1395px;top:1008.500px;font-size:27px;font-weight:bold;font-style:italic;color:#3b3b3b;letter-spacing:-1.400px;-webkit-text-stroke:2.600px #8c8c8c;paint-order:stroke fill">asp300.cn</div>
<!--PANEL_END-->
</body>
</html>
